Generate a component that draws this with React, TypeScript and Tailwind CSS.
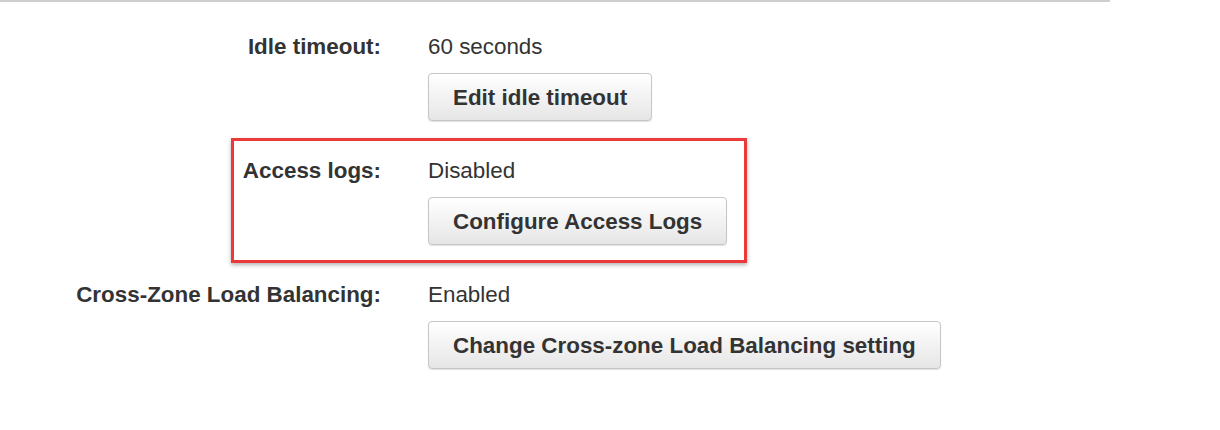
const settings = [
  { label: "Idle timeout:", value: "60 seconds", action: "Edit idle timeout" },
  { label: "Access logs:", value: "Disabled", action: "Configure Access Logs" },
  { label: "Cross-Zone Load Balancing:", value: "Enabled", action: "Change Cross-zone Load Balancing setting" },
]

function SettingRow({ label, value, action }: { label: string; value: string; action: string }) {
  return (
    <div className="flex">
      <div className="w-[381px] shrink-0 text-right font-bold leading-[25px] text-[#333]">{label}</div>
      <div className="ml-[47px] flex flex-col items-start">
        <div className="leading-[25px] text-[#333]">{value}</div>
        <button className="mt-[14px] flex h-[48px] items-center rounded-[4px] border border-[#c6c6c6] bg-gradient-to-b from-white to-[#e6e6e6] px-6 font-bold leading-[25px] text-[#333] shadow-[0_1px_1px_rgba(0,0,0,0.12)]">
          {action}
        </button>
      </div>
    </div>
  )
}

export default function App() {
  return (
    <div
      className="relative h-[430px] w-[1220px] overflow-hidden bg-white text-[22.4px]"
      style={{ fontFamily: '"Liberation Sans", Arial, sans-serif' }}
    >
      <div className="h-[2px] w-[1110px] bg-[#cfcfcf]" />
      <div className="mt-[32px] flex flex-col gap-[37px]">
        {settings.map((s) => (
          <SettingRow key={s.label} {...s} />
        ))}
      </div>
      <div className="pointer-events-none absolute left-[231px] top-[138px] h-[125px] w-[516px] border-[3px] border-[#ec3a3a] shadow-[0_2px_4px_rgba(0,0,0,0.3)]" />
    </div>
  )
}
